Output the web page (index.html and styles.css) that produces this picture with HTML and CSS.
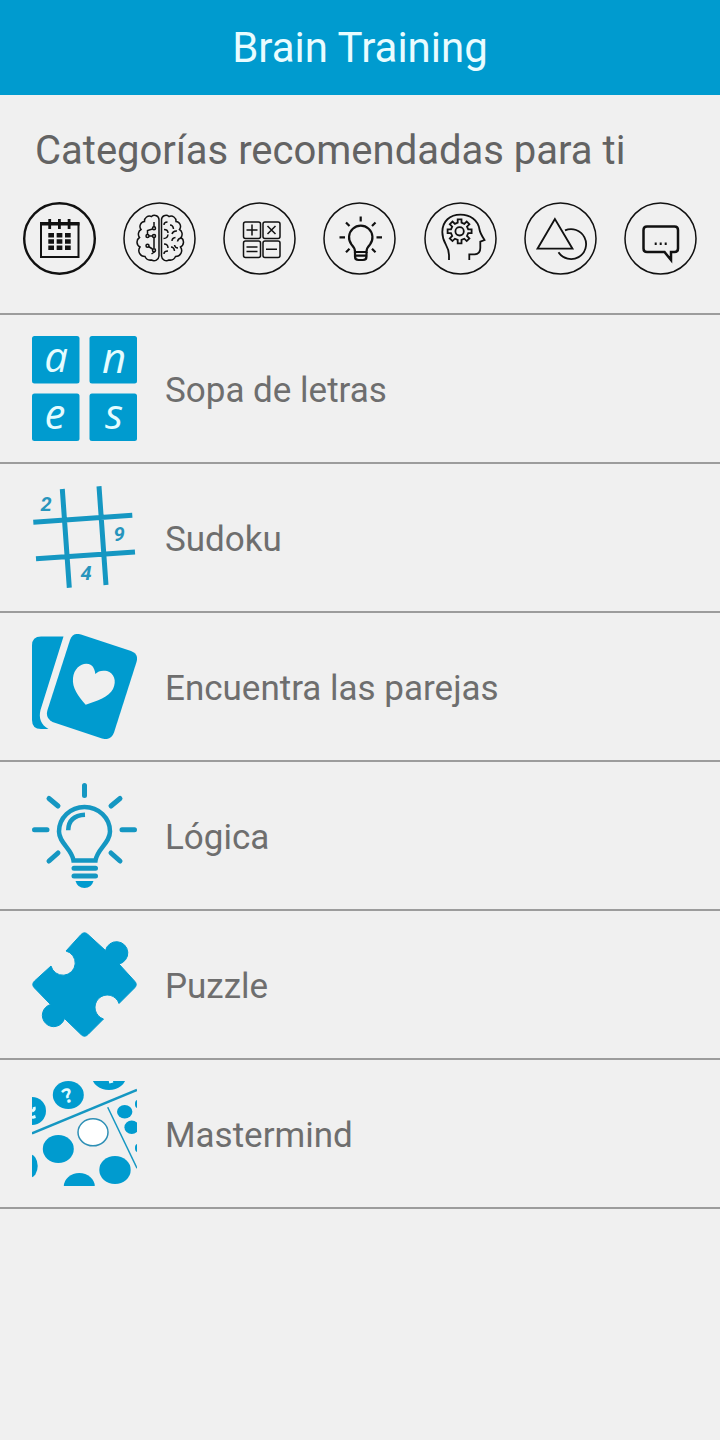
FILE: index.html
```
<!DOCTYPE html>
<html lang="es">
<head>
    <meta charset="UTF-8">
    <meta name="viewport" content="width=device-width, initial-scale=1.0">
    <title>Brain Training</title>
    <link rel="stylesheet" href="styles.css">
</head>
<body>
    <header class="header">
        <h1 class="title">Brain Training</h1>
    </header>

    <main>
        <section class="recommended">
            <h2 class="recommended-title">Categorías recomendadas para ti</h2>
            <div class="category-row">
                <button class="category-btn" type="button" aria-label="Calendario">
                    <svg viewBox="0 0 73 73">
                        <circle cx="36.5" cy="36.5" r="35.3" stroke-width="2.4"/>
                        <rect x="18" y="21" width="37.5" height="34" stroke-width="2"/>
                        <path d="M17 22h39.5" stroke-width="3"/>
                        <path d="M26.7 17v10M36.4 17v10M46.1 17v10" stroke-width="2.8"/>
                        <path d="M25.3 33.2h22.4M25.3 39.5h22.4M25.3 45.8h22.4" stroke-width="4.6" stroke-dasharray="5.7 2.65"/>
                    </svg>
                </button>
                <button class="category-btn" type="button" aria-label="Memoria">
                    <svg viewBox="0 0 73 73" stroke-width="1.5">
                        <circle cx="36.5" cy="36.5" r="35.5"/>
                        <path d="M36 54V18A4.5 4.5 0 0 0 28.5 14.5A5 5 0 0 0 21.5 19.5A5 5 0 0 0 18 27.5A5.5 5.5 0 0 0 16.5 35.5A5.5 5.5 0 0 0 17 45A6 6 0 0 0 22 54.5A6 6 0 0 0 28.5 58A5 5 0 0 0 36 54Z"/>
                        <path d="M38.5 54V18A4.5 4.5 0 0 1 46 14.5A5 5 0 0 1 53 19.5A5 5 0 0 1 56.5 27.5A5.5 5.5 0 0 1 58 35.5A5.5 5.5 0 0 1 57.5 45A6 6 0 0 1 52.5 54.5A6 6 0 0 1 46 58A5 5 0 0 1 38.5 54Z"/>
                        <path d="M31 20v5M29.5 27l-5 1.5v4M26 34h3.5M31 36v10M25.5 44.5l4 2.5M32 49.5l-3.5 2.5"/>
                        <circle cx="31" cy="26.3" r="1.5"/>
                        <circle cx="24.5" cy="34" r="1.5"/>
                        <circle cx="31" cy="34" r="1.5"/>
                        <circle cx="24.5" cy="43.7" r="1.5"/>
                        <circle cx="31" cy="48.3" r="1.5"/>
                        <path d="M41 23q0-3 3.5-3M47 23q3 0 3.5 4M41 27.5q4 0 4 3.5M54 29q-4-.5-5 3M40.5 36.5q4 0 4.5-4M49 39q0-3 3.5-3.5M58 36q-3 .5-3.5 3.5M41 42q4 0 4 4M48 45q3 0 3.5 4M41 52q0-3 4-3M55 46q-3 0-3.5-3"/>
                    </svg>
                </button>
                <button class="category-btn" type="button" aria-label="Cálculo">
                    <svg viewBox="0 0 73 73" stroke-width="1.5">
                        <circle cx="36.5" cy="36.5" r="35.5"/>
                        <rect x="20.5" y="20" width="17" height="16.5" rx="2"/>
                        <rect x="40" y="20" width="17" height="16.5" rx="2"/>
                        <rect x="20.5" y="39" width="17" height="16.5" rx="2"/>
                        <rect x="40" y="39" width="17" height="16.5" rx="2"/>
                        <path d="M23.5 28h11M29 22.5v11M44.5 24l8 8M52.5 24l-8 8M23.5 45h11M23.5 49.5h11M43 47.2h11"/>
                    </svg>
                </button>
                <button class="category-btn" type="button" aria-label="Ideas">
                    <svg viewBox="0 0 73 73" stroke-width="2.2">
                        <circle cx="36.5" cy="36.5" r="35.5" stroke-width="1.5"/>
                        <path d="M32 50q0-4-3.5-7.5a11.7 11.7 0 1 1 18.5 0q-3.5 3.5-3.5 7.5z"/>
                        <path d="M32 50v4.5q0 3.5 3.5 3.5h4.5q3.5 0 3.5-3.5v-4.5M32 53.7h11.5"/>
                        <path d="M37.7 14.5v5M16.5 35.3h5.5M53.5 35.3h5.5M23 20.5l3.5 3.5M52.5 20.5l-3.5 3.5M23 50.3l3.5-3.5M52.5 50.3l-3.5-3.5"/>
                    </svg>
                </button>
                <button class="category-btn" type="button" aria-label="Razonamiento">
                    <svg viewBox="0 0 73 73" stroke-width="1.8">
                        <circle cx="36.5" cy="36.5" r="35.5" stroke-width="1.5"/>
                        <path d="M25 58v-5C25 43 18.3 42 18.3 30C18.3 19 26 12.7 36.5 12.7C46 12.7 54 18 55.5 27.5C56 31 57 32.5 60.5 38L56.3 39.7V46Q56.3 52.3 50.5 52.3H45.3V58"/>
                        <path transform="translate(35.6 29.3)" d="M8.6-1.9H12V1.9H8.6L7.4 4.7L9.8 7.1L7.1 9.8L4.7 7.4L1.9 8.6V12H-1.9V8.6L-4.7 7.4L-7.1 9.8L-9.8 7.1L-7.4 4.7L-8.6 1.9H-12V-1.9H-8.6L-7.4-4.7L-9.8-7.1L-7.1-9.8L-4.7-7.4L-1.9-8.6V-12H1.9V-8.6L4.7-7.4L7.1-9.8L9.8-7.1L7.4-4.7Z"/>
                        <circle cx="35.6" cy="29.3" r="4.2"/>
                    </svg>
                </button>
                <button class="category-btn" type="button" aria-label="Formas">
                    <svg viewBox="0 0 73 73" stroke-width="1.8">
                        <circle cx="36.5" cy="36.5" r="35.5" stroke-width="1.5"/>
                        <path d="M30.9 17L13.5 46.7H48.5Z"/>
                        <path d="M41 28.4A15 15 0 1 1 34.5 50.3"/>
                    </svg>
                </button>
                <button class="category-btn" type="button" aria-label="Lenguaje">
                    <svg viewBox="0 0 73 73" stroke-width="2.5">
                        <circle cx="36.5" cy="36.5" r="35.5" stroke-width="1.5"/>
                        <path d="M23 24.5H50.5Q54 24.5 54 28V46.5Q54 50 50.5 50H47V58L40.5 50H23Q19.5 50 19.5 46.5V28Q19.5 24.5 23 24.5Z"/>
                        <path d="M30.7 41.7h2M35.7 41.7h2M40.7 41.7h2"/>
                    </svg>
                </button>
            </div>
        </section>

        <nav>
            <ul class="game-list">
                <li>
                    <a class="game-item" href="#sopa">
                        <svg class="game-icon tiles" viewBox="0 0 105 105" aria-hidden="true">
                            <rect width="47.5" height="47.5" rx="2.5"/>
                            <rect x="57.5" width="47.5" height="47.5" rx="2.5"/>
                            <rect y="57.5" width="47.5" height="47.5" rx="2.5"/>
                            <rect x="57.5" y="57.5" width="47.5" height="47.5" rx="2.5"/>
                            <g class="tile-letters">
                                <text x="24" y="36">a</text>
                                <text x="82" y="37">n</text>
                                <text x="23" y="93">e</text>
                                <text x="82" y="93">s</text>
                            </g>
                        </svg>
                        <span class="game-name">Sopa de letras</span>
                    </a>
                </li>
                <li>
                    <a class="game-item" href="#sudoku">
                        <svg class="game-icon" viewBox="0 0 105 105" aria-hidden="true">
                            <path class="line" stroke-width="5" d="M30.3 4L37.3 102.7M67 1.3L74 100M1.3 37.3L100.3 30.3M4 73.7L103 67"/>
                            <g class="sudoku-digits">
                                <text x="14" y="26">2</text>
                                <text x="87" y="56">9</text>
                                <text x="54" y="95">4</text>
                            </g>
                        </svg>
                        <span class="game-name">Sudoku</span>
                    </a>
                </li>
                <li>
                    <a class="game-item" href="#parejas">
                        <svg class="game-icon" viewBox="0 0 105 105" aria-hidden="true">
                            <path d="M31.5 2.5H9Q0 2.5 0 11.5V86Q0 95 9 95H16.5C9 91 6.5 84 8.5 76Z"/>
                            <path d="M38 6L15.5 76Q13 84 20.5 88L70 104.5Q79 107 82 98.5L104.5 28Q107 20 99 17L49 .5Q41-2 38 6Z"/>
                            <path class="paper" d="M53.7 70.7C46 62 40 54 41 44C42 33 52 27 59 31C62 33 63 37 63.3 40C66 37 70 36 75 37C82 39 85 47 81 55C77 63 65 67 53.7 70.7Z"/>
                        </svg>
                        <span class="game-name">Encuentra las parejas</span>
                    </a>
                </li>
                <li>
                    <a class="game-item" href="#logica">
                        <svg class="game-icon" viewBox="0 0 105 105" aria-hidden="true">
                            <path class="line" stroke-width="5" stroke-linecap="round" d="M52.5 2.5V12.5M2.5 46.7H15M90 46.7H102.5M17 15.5L26 23M88 15.5L79 23M17 78L26 70M88 78L79 70M42 85.3H63.5M42 93H63.5"/>
                            <path class="line" stroke-width="4.5" d="M41.5 77.5C40 66 27 60 27 48.5A25.5 24.5 0 0 1 78 48.5C78 60 65 66 63.5 77.5Z"/>
                            <path class="line" stroke-width="4.5" d="M36.2 47.3Q36.5 32.5 53 31.7"/>
                            <path d="M43.5 98h18q-2 7-9 7t-9-7z"/>
                        </svg>
                        <span class="game-name">Lógica</span>
                    </a>
                </li>
                <li>
                    <a class="game-item" href="#puzzle">
                        <svg class="game-icon" viewBox="0 0 105 105" aria-hidden="true">
                            <path class="puzzle-piece" d="M49 2.5Q52.5-1 56 2.5L73.5 18.5A11.3 11.3 0 1 1 87 32L102.5 49Q106 52.5 102.5 56L87 71.5A12.3 12.3 0 1 0 71.5 87L56 102.5Q52.5 106 49 102.5L32.500 86.5A11.3 11.3 0 1 1 18.5 72.5L2.500 56Q-1 52.5 2.5 49L19 34A12.3 12.3 0 1 0 34 19Z"/>
                        </svg>
                        <span class="game-name">Puzzle</span>
                    </a>
                </li>
                <li>
                    <a class="game-item" href="#mastermind">
                        <svg class="game-icon" viewBox="0 0 105 105" aria-hidden="true">
                            <ellipse cx="36.3" cy="14" rx="15.5" ry="14"/>
                            <ellipse cx="77" cy="-4.5" rx="17" ry="13.5"/>
                            <ellipse cx="0" cy="30" rx="14" ry="14"/>
                            <path class="line" stroke-width="2.5" d="M0 52.3L105 9"/>
                            <path class="line" stroke-width="1.5" d="M75.7 26.3L105 87.3"/>
                            <ellipse cx="26.3" cy="68" rx="15.5" ry="14"/>
                            <ellipse cx="83" cy="89" rx="15.7" ry="14"/>
                            <ellipse cx="47.3" cy="105.5" rx="15.5" ry="13.5"/>
                            <ellipse cx="-2" cy="85" rx="7.7" ry="11.5"/>
                            <ellipse cx="92.7" cy="30.7" rx="7.7" ry="6.8"/>
                            <ellipse cx="99.7" cy="46.3" rx="7.3" ry="6.8"/>
                            <ellipse cx="105.5" cy="23" rx="2.5" ry="4"/>
                            <ellipse cx="105.5" cy="67" rx="2.5" ry="4"/>
                            <ellipse class="empty-peg" cx="61" cy="51.3" rx="15" ry="13.5"/>
                            <text class="peg-mark" transform="translate(38 21) rotate(-20)">?</text>
                            <!-- marks of the pegs that run off the edge -->
                            <path class="peg-edge" d="M0 30Q3 29 2 26M0 36.5L3.5 35.5M77 1L81 0"/>
                        </svg>
                        <span class="game-name">Mastermind</span>
                    </a>
                </li>
            </ul>
        </nav>
    </main>
</body>
</html>
```

FILE: styles.css
```
* {
    margin: 0;
    padding: 0;
    box-sizing: border-box;
}
:root {
    --primary-color: #009bcf;
    --light-bg: #f0f0f0;
    --heading-color: #636363;
    --text-color: #6e6e6e;
    --line-color: #9c9c9c;
}
body {
    font-family: Roboto, "Liberation Sans", sans-serif;
    background-color: var(--light-bg);
    color: var(--text-color);
    min-height: 100vh;
}
.header {
    background: var(--primary-color);
    padding: 24px 16px 23px;
    text-align: center;
}
.title {
    font-size: 42px;
    font-weight: 400;
    line-height: 48px;
    color: #e9fcff;
}
.recommended {
    padding: 32px 23px 38px;
}
.recommended-title {
    margin: 0 0 27px 12px;
    font-size: 40px;
    font-weight: 400;
    line-height: 48px;
    color: var(--heading-color);
}
.category-row {
    display: flex;
    justify-content: space-between;
}
.category-btn {
    width: 73px;
    height: 73px;
    border: none;
    border-radius: 50%;
    background: none;
    cursor: pointer;
}
.category-btn svg {
    display: block;
    width: 100%;
    height: 100%;
    fill: none;
    stroke: #111;
}
.game-list {
    list-style: none;
    border-top: 2px solid var(--line-color);
}
.game-item {
    display: flex;
    align-items: center;
    gap: 28px;
    padding: 21px 32px;
    border-bottom: 2px solid var(--line-color);
    font-size: 35px;
    line-height: 48px;
    color: inherit;
    text-decoration: none;
}
.game-name {
    padding-top: 4px;
}
.game-icon {
    flex: none;
    width: 105px;
    height: 105px;
    fill: var(--primary-color);
}
.game-icon.tiles {
    overflow: visible;
}
.game-icon .line {
    fill: none;
    stroke: #1597c2;
}
.game-icon .paper {
    fill: var(--light-bg);
}
.tile-letters {
    font: italic 500 42px "Open Sans", "Noto Sans", sans-serif;
    fill: #e4fcff;
    text-anchor: middle;
}
.sudoku-digits {
    font: italic bold 20px Roboto, "Liberation Sans", sans-serif;
    fill: #2795bd;
    text-anchor: middle;
}
.puzzle-piece {
    stroke: var(--primary-color);
    stroke-width: 1px;
    stroke-linejoin: round;
}
.empty-peg {
    fill: #fff;
    stroke: #2d8fb5;
    stroke-width: 1.5px;
}
.peg-mark {
    font: bold 20px "Open Sans", sans-serif;
    fill: #e4fcff;
    text-anchor: middle;
}
.peg-edge {
    fill: none;
    stroke: #e4fcff;
    stroke-width: 3px;
}
```
